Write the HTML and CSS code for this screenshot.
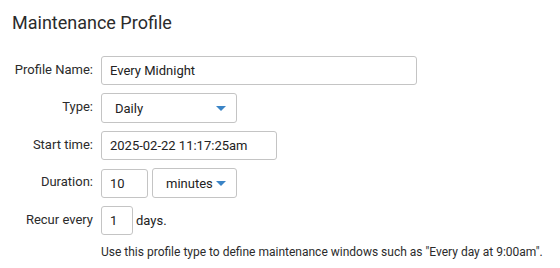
FILE: index.html
```html
<!DOCTYPE html>
<html lang="en">
<head>
    <meta charset="UTF-8">
    <title>Maintenance Profile</title>
    <link rel="stylesheet" href="styles.css">
</head>
<body>
    <h1>Maintenance Profile</h1>

    <div class="form">
        <label class="label">Profile Name:</label>
        <div class="field"><input class="text name" type="text" value="Every Midnight"></div>

        <label class="label">Type:</label>
        <div class="field">
            <div class="select type">Daily <span class="caret"></span></div>
        </div>

        <label class="label">Start time:</label>
        <div class="field"><input class="text start" type="text" value="2025-02-22 11:17:25am"></div>

        <label class="label">Duration:</label>
        <div class="field">
            <input class="text num" type="text" value="10">
            <div class="select unit">minutes <span class="caret"></span></div>
        </div>

        <label class="label">Recur every</label>
        <div class="field">
            <input class="text small" type="text" value="1">
            <span class="suffix">days.</span>
        </div>

        <div></div>
        <p class="help">Use this profile type to define maintenance windows such as "Every day at 9:00am".</p>
    </div>
</body>
</html>
```

FILE: styles.css
```css
* {
    margin: 0;
    padding: 0;
    box-sizing: border-box;
}

body {
    font-family: Roboto, sans-serif;
    color: #222;
    background: #fff;
    padding: 11px 12px;
}

h1 {
    font-size: 18px;
    font-weight: 400;
    line-height: 24px;
    color: #2b2b2b;
    margin-bottom: 21px;
}

.form {
    display: grid;
    grid-template-columns: 81px auto;
    column-gap: 8px;
    row-gap: 8px;
    font-size: 13px;
}

.label {
    text-align: right;
    white-space: nowrap;
    padding-top: 6px;
    color: #2b2b2b;
}

.field {
    display: flex;
    align-items: center;
    gap: 4px;
}

.text, .select {
    font-family: inherit;
    font-size: 13px;
    color: #222;
    border: 1px solid #c4c4c4;
    border-radius: 3px;
    background: #fff;
    height: 29px;
    padding: 0 8px;
    outline: none;
}

.name { width: 316px; }
.start { width: 176px; }
.num { width: 47px; }
.small { width: 32px; }

.select {
    display: flex;
    align-items: center;
    justify-content: space-between;
    height: 30px;
    padding: 0 10px 0 13px;
}

.type { width: 136px; }
.unit { width: 85px; }

.caret {
    width: 0;
    height: 0;
    border-left: 5px solid transparent;
    border-right: 5px solid transparent;
    border-top: 5px solid #3a84c6;
}

.suffix {
    margin-left: -1px;
}

.help {
    margin-top: 2px;
    font-size: 12px;
    white-space: nowrap;
    color: #2b2b2b;
}
```
